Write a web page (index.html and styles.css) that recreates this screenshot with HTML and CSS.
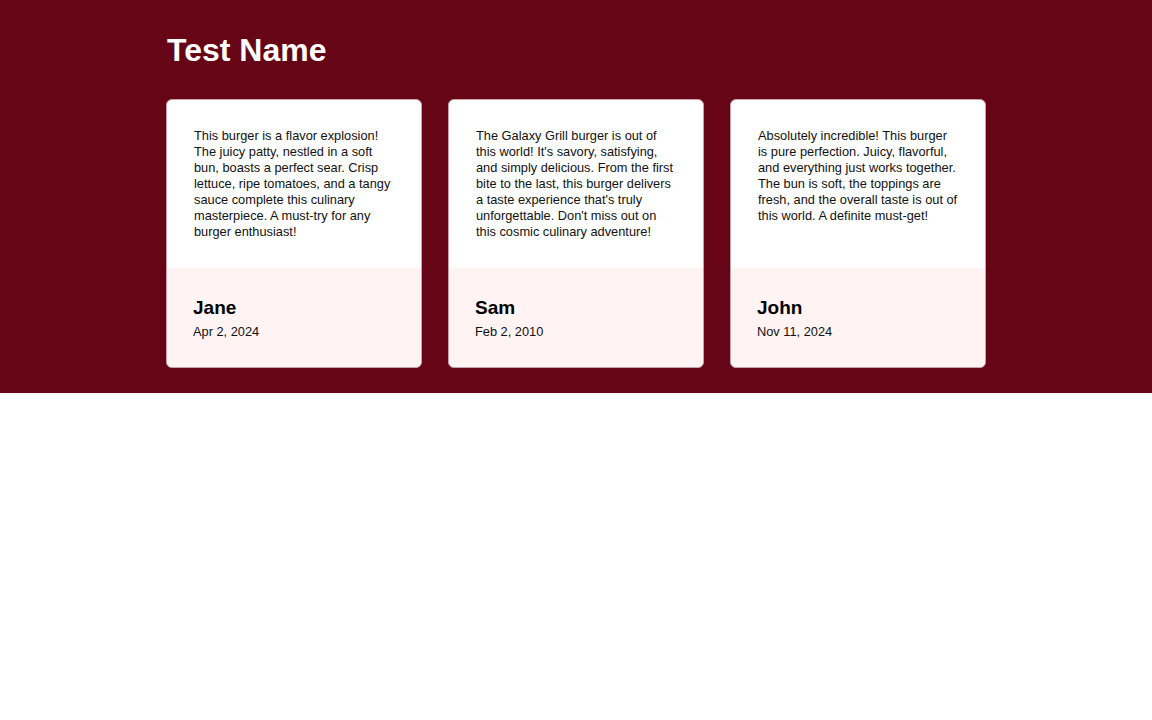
FILE: index.html
```html
<!DOCTYPE html>
<html>
<head>
<meta charset="utf-8">
<link rel="stylesheet" href="styles.css">
</head>
<body>
<section class="hero">
  <div class="container">
    <h1 class="title">Test Name</h1>
    <div class="cards">
      <article class="card">
        <p class="card-text">This burger is a flavor explosion! The juicy patty, nestled in a soft bun, boasts a perfect sear. Crisp lettuce, ripe tomatoes, and a tangy sauce complete this culinary masterpiece. A must-try for any burger enthusiast!</p>
        <div class="card-foot">
          <div class="name">Jane</div>
          <div class="date">Apr 2, 2024</div>
        </div>
      </article>
      <article class="card">
        <p class="card-text">The Galaxy Grill burger is out of this world! It's savory, satisfying, and simply delicious. From the first bite to the last, this burger delivers a taste experience that's truly unforgettable. Don't miss out on this cosmic culinary adventure!</p>
        <div class="card-foot">
          <div class="name">Sam</div>
          <div class="date">Feb 2, 2010</div>
        </div>
      </article>
      <article class="card">
        <p class="card-text">Absolutely incredible! This burger is pure perfection. Juicy, flavorful, and everything just works together. The bun is soft, the toppings are fresh, and the overall taste is out of this world. A definite must-get!</p>
        <div class="card-foot">
          <div class="name">John</div>
          <div class="date">Nov 11, 2024</div>
        </div>
      </article>
    </div>
  </div>
</section>
</body>
</html>
```
FILE: styles.css
```css
html, body {
  margin: 0;
  padding: 0;
  background: #ffffff;
  font-family: "Liberation Sans", Arial, sans-serif;
}
.hero {
  background: #650515;
  padding: 30px 0 25px;
}
.container {
  width: 820px;
  margin: 0 auto;
}
.title {
  margin: 0 0 29px 1px;
  color: #ffffff;
  font-size: 32px;
  line-height: 40px;
  font-weight: 700;
}
.cards {
  display: grid;
  grid-template-columns: repeat(3, 256px);
  column-gap: 26px;
}
.card {
  display: flex;
  flex-direction: column;
  background: #ffffff;
  border: 1px solid #c9a1a8;
  border-radius: 6px;
  overflow: hidden;
}
.card-text {
  flex: 1;
  margin: 0;
  padding: 28px 26px 28px 27px;
  font-size: 12.8px;
  line-height: 16px;
  color: #111111;
}
.card-foot {
  background: #fff3f4;
  padding: 27px 25px 27px 26px;
}
.name {
  font-size: 19px;
  line-height: 26px;
  font-weight: 700;
  color: #000;
}
.date {
  margin-top: 3px;
  font-size: 12.8px;
  line-height: 16px;
  color: #111;
}
```
